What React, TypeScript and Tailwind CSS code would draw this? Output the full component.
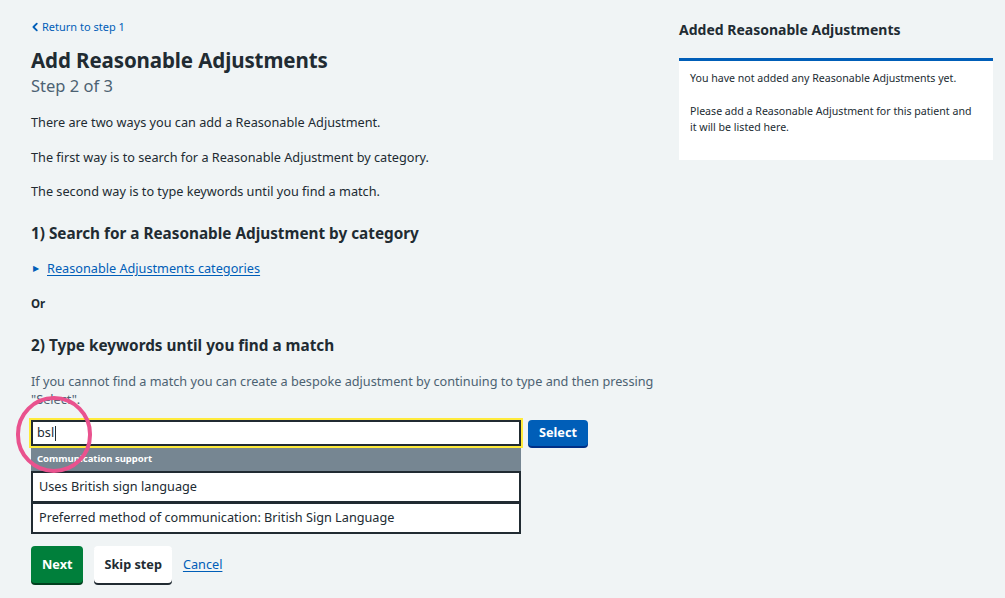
import React from "react";

const font = { fontFamily: '"Noto Sans", "Open Sans", Arial, sans-serif' };

function ChevronLeft() {
  return (
    <svg width="8" height="10" viewBox="0 0 8 10" fill="none">
      <path d="M5.8 1.6 2.4 5 5.8 8.4" stroke="#005eb8" strokeWidth="1.8" strokeLinecap="round" strokeLinejoin="round" />
    </svg>
  );
}

export default function App() {
  return (
    <div className="relative min-h-[598px] w-full bg-[#f0f4f5] text-[#212b32]" style={font}>
      <div className="flex gap-[20px] pl-[31px] pr-3">
        {/* main column */}
        <div className="w-[628px] shrink-0 pt-[19px]">
          <a href="#" className="flex items-center gap-[3px] text-[11px] leading-4 text-[#005eb8] no-underline">
            <ChevronLeft />
            Return to step 1
          </a>

          <h1 className="mt-[11px] text-[20.5px] font-bold leading-7 tracking-[-0.1px]">Add Reasonable Adjustments</h1>
          <p className="mt-0 text-[16.5px] leading-6 text-[#4c6272]">Step 2 of 3</p>

          <p className="mt-[14px] text-[12.7px] leading-5">There are two ways you can add a Reasonable Adjustment.</p>
          <p className="mt-[15px] text-[12.7px] leading-5">The first way is to search for a Reasonable Adjustment by category.</p>
          <p className="mt-[14px] text-[12.7px] leading-5">The second way is to type keywords until you find a match.</p>

          <h2 className="mt-[20px] text-[15.3px] font-bold leading-6">1) Search for a Reasonable Adjustment by category</h2>

          <div className="mt-[13px] flex items-center gap-[8px] pl-[2px] text-[12.7px] leading-5">
            <span className="text-[8px] text-[#005eb8]">&#9654;</span>
            <a href="#" className="text-[#005eb8] underline underline-offset-2">Reasonable Adjustments categories</a>
          </div>

          <p className="mt-[16px] text-[11.5px] font-bold leading-5">Or</p>

          <h2 className="mt-[19px] text-[15.3px] font-bold leading-6">2) Type keywords until you find a match</h2>

          <p className="mt-[15px] text-[12.7px] leading-[18px] text-[#4c6272]">
            If you cannot find a match you can create a bespoke adjustment by continuing to type and then pressing "Select".
          </p>

          <div className="mt-[10px] flex items-start gap-[5px]">
            <div className="-ml-[2px] w-[494px]">
              <div className="border-[2px] border-[#ffeb3b]">
                <div className="flex h-[26px] items-center border-2 border-[#212b32] bg-white px-[4px] text-[12.7px]">
                  bsl<span className="ml-[1px] inline-block h-[15px] w-px bg-[#212b32]" />
                </div>
              </div>
              <div className="ml-[2px] w-[490px]">
                <div className="flex h-[23px] items-center bg-[#768692] px-[6px] text-[9.5px] font-bold text-white">Communication support</div>
                <div className="flex h-[32px] items-center border-2 border-[#212b32] bg-white px-[6px] text-[12.7px]">Uses British sign language</div>
                <div className="-mt-[1px] flex h-[32px] items-center border-2 border-[#212b32] bg-white px-[6px] text-[12.7px]">Preferred method of communication: British Sign Language</div>
              </div>
            </div>
            <button className="mt-[2px] h-[26px] rounded-[4px] bg-[#005eb8] px-[11px] text-[12.7px] font-bold text-white shadow-[0_2px_0_#003087]">Select</button>
          </div>

          <div className="mt-[12px] flex items-center gap-[11px]">
            <button className="h-[37px] rounded-[4px] bg-[#007f3b] px-[11px] text-[12.7px] font-bold text-white shadow-[0_2px_0_#00401e]">Next</button>
            <button className="h-[37px] rounded-[4px] bg-white px-[10px] text-[12.7px] font-bold text-[#212b32] shadow-[0_2px_0_#212b32]">Skip step</button>
            <a href="#" className="text-[12.7px] text-[#005eb8] underline underline-offset-2">Cancel</a>
          </div>
        </div>

        {/* side panel */}
        <div className="w-[314px] shrink-0 pt-[20px]">
          <h3 className="text-[14px] font-bold leading-5">Added Reasonable Adjustments</h3>
          <div className="mt-[18px] h-[102px] border-t-[3px] border-[#005eb8] bg-white pl-[11px] pr-[18px] pt-[9px] text-[10.6px] leading-4">
            <p>You have not added any Reasonable Adjustments yet.</p>
            <p className="mt-[17px]">Please add a Reasonable Adjustment for this patient and it will be listed here.</p>
          </div>
        </div>
      </div>

      {/* annotation ring */}
      <div className="pointer-events-none absolute left-[16px] top-[396px] h-[77px] w-[76px] rounded-full border-[4px] border-[#e9528e]" />
    </div>
  );
}
